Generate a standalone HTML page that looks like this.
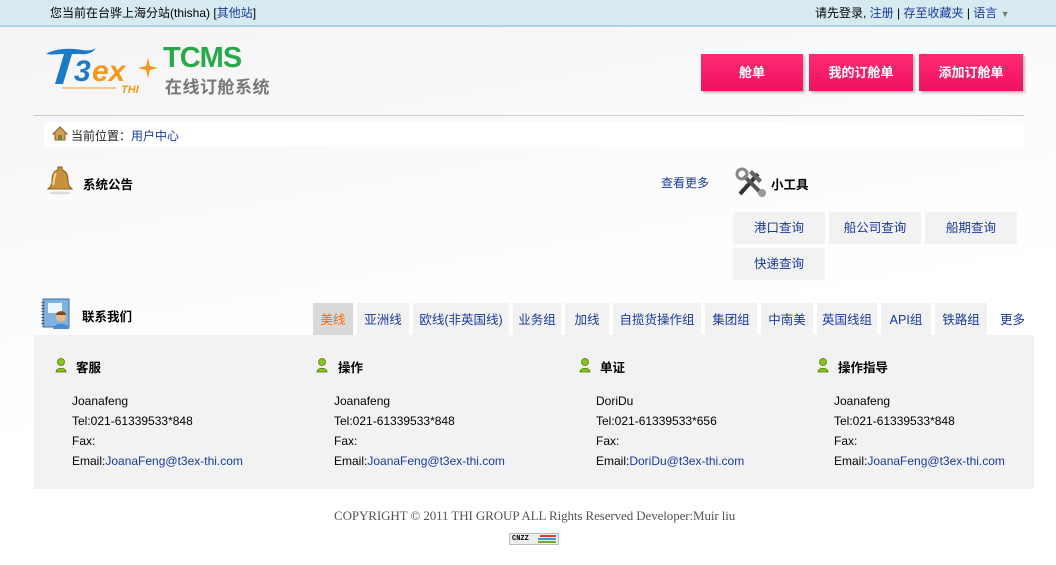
<!DOCTYPE html>
<html><head><meta charset="utf-8"><style>
*{margin:0;padding:0;box-sizing:border-box}
body{width:1056px;height:565px;overflow:hidden;background:linear-gradient(170deg,#f3f3f3 0%,#fafafa 30%,#fff 60%);font-family:"Liberation Sans","Noto Sans CJK SC",sans-serif;font-size:12px;color:#000;position:relative}
.a{position:absolute;white-space:nowrap}
a,.l{color:#1a3a9a;text-decoration:none}
.top{left:0;top:0;width:1056px;height:27px;background:#d6eaf0;border-bottom:2px solid #a8d4de}
.btn{top:54px;height:37px;background:linear-gradient(#ff2a72,#ee1262);color:#fff;font-weight:bold;font-size:13px;text-align:center;line-height:37px;box-shadow:2px 2px 2px #bbb}
.tab{top:303px;height:32px;background:#f2f2f2;color:#1a3a9a;text-align:center;line-height:34px;font-size:12.5px}
.tool{height:32px;width:92px;background:#f2f2f2;color:#1a3a9a;text-align:center;line-height:32px;font-size:12.5px}
.h{font-weight:bold;font-size:12.5px}
.c{line-height:20px;font-size:12px}
.p{width:12px;height:15px}
</style></head><body>
<div class="a top"></div>
<div class="a" style="left:50px;top:4px">您当前在台骅上海分站(thisha) [<a>其他站</a>]</div>
<div class="a" style="left:815px;top:4px">请先登录, <a>注册</a> | <a>存至收藏夹</a> | <a>语言</a> <span style="color:#777;font-size:9px">▼</span></div>

<svg class="a" style="left:44px;top:44px" width="120" height="52">
<path d="M2 10c10-6 26-6 36-4 5 1 12 0 14-2-3 5-10 7-16 6l-8 0-9 30h-8l9-30c-6 0-12 1-18 0z" fill="#1a7cc4"/>
<text x="30" y="37" font-family="Liberation Sans" font-weight="bold" font-style="italic" font-size="30" fill="#1a7cc4">3</text>
<text x="48" y="37" font-family="Liberation Sans" font-weight="bold" font-style="italic" font-size="30" fill="#f39a1e">ex</text>
<path d="M104 14l2 8 8 2-8 2-2 8-2-8-8-2 8-2z" fill="#f39a1e"/>
<line x1="18" y1="44" x2="72" y2="44" stroke="#f39a1e" stroke-width="1"/>
<text x="77" y="49" font-family="Liberation Sans" font-weight="bold" font-style="italic" font-size="11" fill="#f39a1e">THI</text>
</svg>
<div class="a" style="left:163px;top:42px;color:#2aa84a;font:bold 29px 'Liberation Sans',sans-serif;letter-spacing:-1px">TCMS</div>
<div class="a" style="left:165px;top:73px;color:#777;font-weight:bold;font-size:17px;letter-spacing:0.5px">在线订舱系统</div>

<div class="a btn" style="left:701px;width:102px">舱单</div>
<div class="a btn" style="left:809px;width:104px">我的订舱单</div>
<div class="a btn" style="left:919px;width:104px">添加订舱单</div>

<div class="a" style="left:34px;top:115px;width:990px;height:1px;background:#ccc"></div>
<div class="a" style="left:44px;top:122px;width:980px;height:25px;background:#fff"></div>
<svg class="a" style="left:52px;top:126px" width="16" height="15"><path d="M1 8L8 1l7 7h-2v6H3V8z" fill="#d8a060" stroke="#8a5a18"/><rect x="6" y="9" width="4" height="5" fill="#6a8a3a"/></svg>
<div class="a" style="left:71px;top:127px;color:#222">当前位置：<span class="l">用户中心</span></div>

<svg class="a" style="left:45px;top:165px" width="30" height="30"><ellipse cx="15" cy="28" rx="11" ry="1.5" fill="#ddd"/><path d="M13 2h4v3c5 1 6 6 6 11s2 6 4 8H3c2-2 4-3 4-8s1-10 6-11z" fill="#c8923c" stroke="#8a5a18" stroke-width="1"/><path d="M11 8c-2 3-2 8-3 12" stroke="#f5d79a" stroke-width="2" fill="none"/></svg>
<div class="a h" style="left:83px;top:174px">系统公告</div>
<div class="a l" style="left:661px;top:174px">查看更多</div>

<svg class="a" style="left:734px;top:166px" width="34" height="32"><path d="M6 28L24 8" stroke="#333" stroke-width="4"/><path d="M18 4l10 10-3 3-10-10z" fill="#666"/><path d="M28 28L10 10" stroke="#555" stroke-width="4"/><circle cx="8" cy="8" r="5" fill="none" stroke="#888" stroke-width="3"/><circle cx="28" cy="27" r="4" fill="#999"/></svg>
<div class="a h" style="left:771px;top:174px">小工具</div>
<div class="a tool" style="left:733px;top:212px">港口查询</div>
<div class="a tool" style="left:829px;top:212px">船公司查询</div>
<div class="a tool" style="left:925px;top:212px">船期查询</div>
<div class="a tool" style="left:733px;top:248px">快递查询</div>

<svg class="a" style="left:40px;top:298px" width="34" height="32"><rect x="3" y="1" width="26" height="28" fill="#7fb2e0" stroke="#3a6ea8"/><rect x="8" y="5" width="14" height="10" fill="#eef5fc"/><line x1="3" y1="4" x2="3" y2="27" stroke="#555" stroke-width="3" stroke-dasharray="1 2"/><circle cx="21" cy="19" r="5" fill="#e8b888"/><path d="M16 17c0-5 10-5 10 0" fill="#7a4a20"/><path d="M13 31c0-7 16-7 16 0z" fill="#4a8ad0"/></svg>
<div class="a h" style="left:82px;top:306px">联系我们</div>

<div class="a tab" style="left:313px;width:40px;background:#d9d9d9;color:#ff6a00">美线</div>
<div class="a tab" style="left:357px;width:52px">亚洲线</div>
<div class="a tab" style="left:413px;width:96px">欧线(非英国线)</div>
<div class="a tab" style="left:513px;width:48px">业务组</div>
<div class="a tab" style="left:565px;width:44px">加线</div>
<div class="a tab" style="left:613px;width:88px">自揽货操作组</div>
<div class="a tab" style="left:705px;width:52px">集团组</div>
<div class="a tab" style="left:761px;width:52px">中南美</div>
<div class="a tab" style="left:817px;width:60px">英国线组</div>
<div class="a tab" style="left:881px;width:50px">API组</div>
<div class="a tab" style="left:935px;width:52px">铁路组</div>
<div class="a tab" style="left:991px;width:43px;background:#fff">更多</div>

<div class="a" style="left:34px;top:335px;width:1000px;height:154px;background:#f2f2f2"></div>

<svg class="a p" style="left:55px;top:358px" viewBox="0 0 12 15"><circle cx="6" cy="4" r="3.5" fill="#8cc21a" stroke="#4e7a08" stroke-width=".8"/><path d="M1 14c0-5 10-5 10 0z" fill="#8cc21a" stroke="#4e7a08" stroke-width=".8"/></svg>
<div class="a h" style="left:76px;top:357px">客服</div>
<svg class="a p" style="left:316px;top:358px" viewBox="0 0 12 15"><circle cx="6" cy="4" r="3.5" fill="#8cc21a" stroke="#4e7a08" stroke-width=".8"/><path d="M1 14c0-5 10-5 10 0z" fill="#8cc21a" stroke="#4e7a08" stroke-width=".8"/></svg>
<div class="a h" style="left:338px;top:357px">操作</div>
<svg class="a p" style="left:579px;top:358px" viewBox="0 0 12 15"><circle cx="6" cy="4" r="3.5" fill="#8cc21a" stroke="#4e7a08" stroke-width=".8"/><path d="M1 14c0-5 10-5 10 0z" fill="#8cc21a" stroke="#4e7a08" stroke-width=".8"/></svg>
<div class="a h" style="left:600px;top:357px">单证</div>
<svg class="a p" style="left:817px;top:358px" viewBox="0 0 12 15"><circle cx="6" cy="4" r="3.5" fill="#8cc21a" stroke="#4e7a08" stroke-width=".8"/><path d="M1 14c0-5 10-5 10 0z" fill="#8cc21a" stroke="#4e7a08" stroke-width=".8"/></svg>
<div class="a h" style="left:838px;top:357px">操作指导</div>

<div class="a c" style="left:72px;top:391px">Joanafeng<br>Tel:021-61339533*848<br>Fax:<br>Email:<a>JoanaFeng@t3ex-thi.com</a></div>
<div class="a c" style="left:334px;top:391px">Joanafeng<br>Tel:021-61339533*848<br>Fax:<br>Email:<a>JoanaFeng@t3ex-thi.com</a></div>
<div class="a c" style="left:596px;top:391px">DoriDu<br>Tel:021-61339533*656<br>Fax:<br>Email:<a>DoriDu@t3ex-thi.com</a></div>
<div class="a c" style="left:834px;top:391px">Joanafeng<br>Tel:021-61339533*848<br>Fax:<br>Email:<a>JoanaFeng@t3ex-thi.com</a></div>

<div class="a" style="left:334px;top:508px;font-family:'Liberation Serif',serif;font-size:13px;letter-spacing:-0.1px;color:#555">COPYRIGHT © 2011 THI GROUP ALL Rights Reserved Developer:Muir liu</div>
<div class="a" style="left:509px;top:533px;width:50px;height:12px;background:#eee;border:1px solid #bbb;font:bold 7px 'Liberation Mono',monospace;line-height:10px;padding-left:2px">CNZZ</div>
<div class="a" style="left:540px;top:535px;width:16px;height:2px;background:#e33"></div>
<div class="a" style="left:538px;top:538px;width:18px;height:2px;background:#3a9ad8"></div>
<div class="a" style="left:538px;top:541px;width:18px;height:2px;background:#7a2"></div>
</body></html>
